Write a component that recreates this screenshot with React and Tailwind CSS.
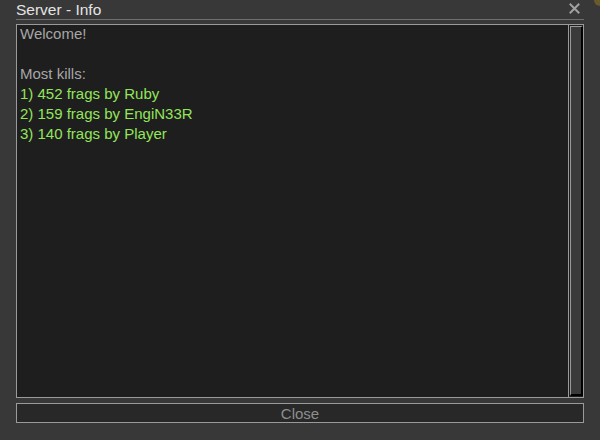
export default function App() {
  const font = { fontFamily: '"Liberation Sans", Arial, sans-serif' };
  return (
    <div className="w-[600px] h-[440px] bg-[#383838] relative overflow-hidden" style={font}>
      <div className="absolute right-0 top-0 w-[6px] h-[6px] bg-[#6a5a28] rounded-bl-[6px]" />
      <div className="flex flex-col h-full px-4">
        <div className="h-[20px] flex items-center justify-between border-b border-[#6e6e6e]">
          <span className="text-[15.5px] text-[#e4e4e4] leading-none mt-[1px]">Server - Info</span>
          <span className="w-[11px] h-[11px] mr-[4px] mt-[-2px]">
            <svg width="11" height="11" viewBox="0 0 11 11">
              <path d="M1.5 1.5 L9.5 9.5 M9.5 1.5 L1.5 9.5" stroke="#a0a0a0" strokeWidth="2" strokeLinecap="square" />
            </svg>
          </span>
        </div>
        <div className="mt-[4px] h-[374px] bg-[#1e1e1e] border border-[#9a9a9a] flex">
          <div className="flex-1 px-[3px] -mt-[1px] text-[15px] leading-[20px]">
            <div className="text-[#a6a6a6]">Welcome!</div>
            <div className="h-[20px]" />
            <div className="text-[#a6a6a6]">Most kills:</div>
            <div className="text-[#93e55c]">1) 452 frags by Ruby</div>
            <div className="text-[#93e55c]">2) 159 frags by EngiN33R</div>
            <div className="text-[#93e55c]">3) 140 frags by Player</div>
          </div>
          <div className="w-[15px] border-l border-[#9a9a9a] pl-[1px] py-[1px] flex">
            <div className="flex-1 bg-[#3a3a3a] border-l border-t border-[#9a9a9a] border-r-2 border-b-2 border-r-[#000] border-b-[#000]" />
          </div>
        </div>
        <div className="mt-[5px] h-[20px] bg-[#282828] border border-[#9a9a9a] flex items-center justify-center">
          <span className="text-[15px] text-[#8e8e8e] leading-none mt-[1px]">Close</span>
        </div>
      </div>
    </div>
  );
}
